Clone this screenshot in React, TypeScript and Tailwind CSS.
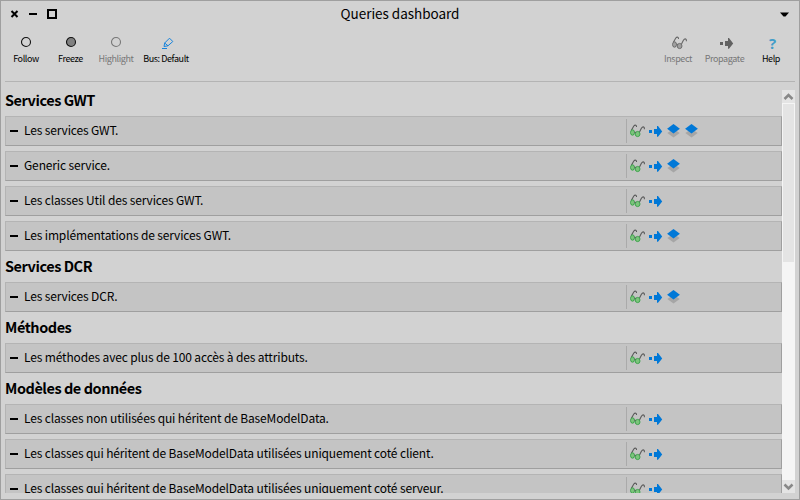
import React from "react";

const FONT = "font-['Noto_Sans_CJK_SC','Noto_Sans',sans-serif]";

function Glasses({ muted = false }: { muted?: boolean }) {
  const line = muted ? "#666666" : "#5a5a5a";
  const lens = muted ? "#a0a0a0" : "#7cc47c";
  const rim = muted ? "#666666" : "#35a046";
  return (
    <svg width="16" height="14" viewBox="0 0 16 14" fill="none" className="block">
      <path d="M1.4 6.3 3.8 2Q4.8 .8 5.8 1.2 6.8 1.6 6.5 3M9.5 8 11.4 4.3Q12.6 2.4 13.7 3 14.6 3.6 14.4 5.3" stroke={line} strokeWidth="1.1" />
      <ellipse cx="2.5" cy="8.5" rx="2" ry="2.7" fill={lens} stroke={rim} strokeWidth="0.9" />
      <ellipse cx="7.6" cy="10" rx="2.4" ry="2.6" fill={lens} stroke={rim} strokeWidth="0.9" />
      <path d="M4.4 8.2 5.8 8.4" stroke={line} />
    </svg>
  );
}

function Arrow({ color = "#0078d7" }: { color?: string }) {
  return (
    <svg width="14" height="12" viewBox="0 0 14 12" fill={color} className="block">
      <path d="M0 5h3v3H0zM5 4h3V1h1L13.2 6.4 9 11.8H8V9H5z" />
    </svg>
  );
}

function Layers() {
  return (
    <svg width="13" height="14" viewBox="0 0 13 14" className="block">
      <path d="M.3 9 6.5 5l6.2 4-6.2 4.6z" fill="#a6a6a6" />
      <path d="M6.5 0 12.9 4.7 6.5 9.5.1 4.7z" fill="#0078d7" />
    </svg>
  );
}

const sections: { title: string; rows: { text: string; layers: number }[] }[] = [
  {
    title: "Services GWT",
    rows: [
      { text: "Les services GWT.", layers: 2 },
      { text: "Generic service.", layers: 1 },
      { text: "Les classes Util des services GWT.", layers: 0 },
      { text: "Les implémentations de services GWT.", layers: 1 },
    ],
  },
  { title: "Services DCR", rows: [{ text: "Les services DCR.", layers: 1 }] },
  { title: "Méthodes", rows: [{ text: "Les méthodes avec plus de 100 accès à des attributs.", layers: 0 }] },
  {
    title: "Modèles de données",
    rows: [
      { text: "Les classes non utilisées qui héritent de BaseModelData.", layers: 0 },
      { text: "Les classes qui héritent de BaseModelData utilisées uniquement coté client.", layers: 0 },
      { text: "Les classes qui héritent de BaseModelData utilisées uniquement coté serveur.", layers: 0 },
    ],
  },
];

function Row({ text, layers }: { text: string; layers: number }) {
  return (
    <div className="mb-[5px] flex h-[30px] border border-t-[#b4b4b4] border-r-[#9f9f9f] border-b-[#9f9f9f] border-l-[#b4b4b4] bg-[#c4c4c4]">
      <div className="flex w-[620px] shrink-0 items-start pl-1">
        <span className="mt-[13px] h-[2px] w-2 bg-black" />
        <span className="ml-[6px] text-[12px] leading-[26px] tracking-[-0.145px] whitespace-nowrap">{text}</span>
      </div>
      <div className="my-[2px] flex border-l border-[#aaaaaa] pl-[3px]">
        <div className="w-[19px] pt-[5px]"><Glasses /></div>
        <div className="w-[17px] pt-[6px]"><Arrow /></div>
        <div className="flex gap-[5px] pt-[5px] pl-px">
          {Array.from({ length: layers }, (_, i) => <Layers key={i} />)}
        </div>
      </div>
    </div>
  );
}

function Tool({ label, width, muted = false, low = false, children }: { label: string; width: string; muted?: boolean; low?: boolean; children: React.ReactNode }) {
  return (
    <div className={`flex flex-col items-center ${width} ${muted ? "text-[#777777]" : "text-black"}`}>
      <div className={`flex h-4 items-center justify-center ${low ? "pt-[2px]" : ""}`}>{children}</div>
      <div className="mt-[2px] text-[9px] leading-[13px] tracking-[-0.4px] whitespace-nowrap">{label}</div>
    </div>
  );
}

function Circle({ fill, stroke }: { fill: string; stroke: string }) {
  return (
    <svg width="12" height="12" viewBox="0 0 12 12">
      <circle cx="6" cy="6" r="4.5" fill={fill} stroke={stroke} strokeWidth="1.1" />
    </svg>
  );
}

export default function App() {
  return (
    <div className={`flex h-[500px] w-[800px] flex-col overflow-hidden border border-[#9f9f9f] bg-[#d2d2d2] text-black ${FONT}`}>
      <header className="flex h-[26px] shrink-0 items-center justify-between pr-[9px] pl-[9px]">
        <div className="flex w-[60px] items-center">
          <svg width="48" height="12" viewBox="0 0 48 12" fill="none" stroke="#000">
            <path d="M1.5 3 7.5 9M7.5 3 1.5 9" strokeWidth="2" />
            <path d="M19 6h8" strokeWidth="2" />
            <path d="M38 2h8v8h-8z" strokeWidth="2" />
          </svg>
        </div>
        <div className="pb-[2px] text-[13.5px] leading-[24px] tracking-[-0.03px]">Queries dashboard</div>
        <div className="flex w-[60px] justify-end">
          <svg width="10" height="5" viewBox="0 0 10 5"><path d="M0 .5h9L5.5 4.5h-2z" /></svg>
        </div>
      </header>
      <nav className="mx-1 flex h-[55px] shrink-0 justify-between border-b border-[#b4b4b4] pt-[7px]">
        <div className="flex">
          <Tool label="Follow" width="w-[42px]"><Circle fill="none" stroke="#111111" /></Tool>
          <Tool label="Freeze" width="w-[47px]"><Circle fill="#808080" stroke="#111111" /></Tool>
          <Tool label="Highlight" width="w-[44px]" muted><Circle fill="none" stroke="#777777" /></Tool>
          <Tool label="Bus: Default" width="w-[56px]" low>
            <svg width="12" height="14" viewBox="0 0 12 14" fill="none" stroke="#1683dc" className="ml-[3px]">
              <path d="M2 10.5 2.7 7 7.5 2.2 10.8 5.5 6 9.8 2 10.5M2.7 7 6 9.8" />
              <path d="M0 12.5h5" />
            </svg>
          </Tool>
        </div>
        <div className="flex">
          <Tool label="Inspect" width="w-[48px]" muted low><div className="pl-1"><Glasses muted /></div></Tool>
          <Tool label="Propagate" width="w-[45px]" muted low><div className="pl-1"><Arrow color="#626262" /></div></Tool>
          <Tool label="Help" width="w-[48px]" low><span className="pl-[3px] font-['Open_Sans',sans-serif] text-[15px] leading-4 font-bold text-[#429dc9]">?</span></Tool>
        </div>
      </nav>
      <main className="mx-1 mb-[6px] flex min-h-0 flex-1">
        <div className="w-[777px] overflow-hidden pt-2">
          {sections.map((s) => (
            <section key={s.title}>
              <h2 className="h-[26px] text-[14.5px] leading-[20px] font-bold tracking-[-0.46px] whitespace-nowrap">{s.title}</h2>
              {s.rows.map((r) => <Row key={r.text} {...r} />)}
            </section>
          ))}
        </div>
        <div className="mt-2 flex w-[13px] flex-col bg-[#f5f5f5]">
          <div className="h-[13px] bg-[#e4e4e4]">
            <svg width="13" height="13" viewBox="0 0 13 13" fill="none" stroke="#888" strokeWidth="2.5"><path d="M2.5 9 6.5 5 10.5 9" /></svg>
          </div>
          <div className="mx-px mt-px h-[158px] bg-[#e4e4e4]" />
          <div className="mt-auto h-[13px] bg-[#e4e4e4]">
            <svg width="13" height="13" viewBox="0 0 13 13" fill="none" stroke="#888" strokeWidth="2.5"><path d="M2.5 4.5 6.5 8.5 10.5 4.5" /></svg>
          </div>
        </div>
      </main>
    </div>
  );
}
